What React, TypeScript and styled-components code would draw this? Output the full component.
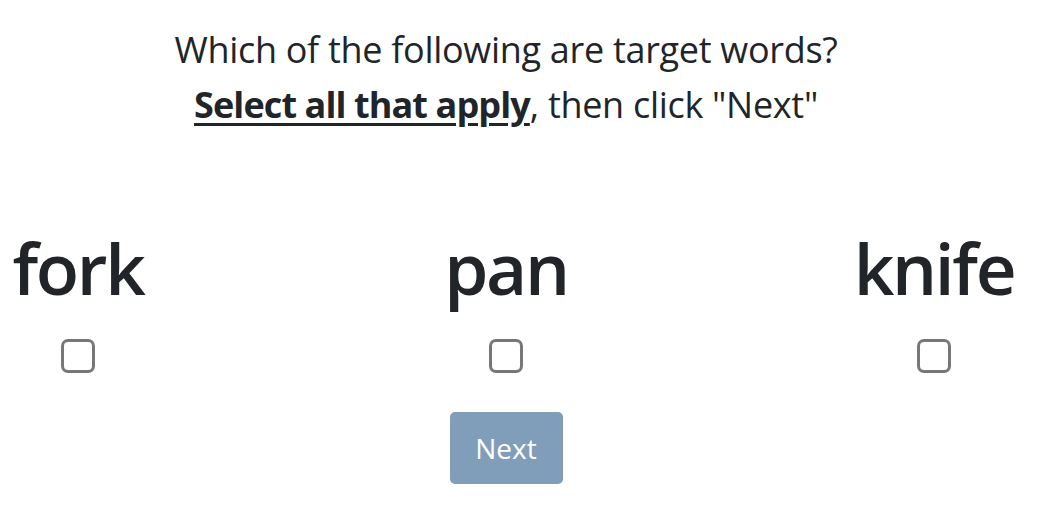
import React from "react";
import styled, { createGlobalStyle } from "styled-components";

const Global = createGlobalStyle`
  html, body { margin: 0; padding: 0; background: #ffffff; }
  body { font-family: "Open Sans", "Noto Sans", sans-serif; color: #212529; }
`;

const Page = styled.div`
  display: flex;
  flex-direction: column;
  align-items: center;
  width: 1012px;
  padding-top: 22px;
`;

const Prompt = styled.div`
  font-size: 36px;
  line-height: 55px;
  letter-spacing: -0.3px;
  text-align: center;
`;

const Strong = styled.span`
  font-weight: 700;
  letter-spacing: -0.9px;
  text-decoration: underline;
  text-decoration-thickness: 3px;
  text-underline-offset: 5px;
`;

const Words = styled.div`
  display: grid;
  grid-template-columns: repeat(3, 156px);
  justify-content: space-between;
  width: 100%;
  margin-top: 96px;
`;

const Option = styled.label`
  display: flex;
  flex-direction: column;
  align-items: center;
`;

const Word = styled.span`
  font-size: 71px;
  font-weight: 600;
  letter-spacing: -2.3px;
  line-height: 80px;
  white-space: nowrap;
`;

const Box = styled.input.attrs({ type: "checkbox" })`
  appearance: none;
  width: 34px;
  height: 34px;
  margin: 31px 0 0 0;
  border: 3px solid #777777;
  border-radius: 7px;
  background: #fff;
  box-sizing: border-box;
`;

const NextButton = styled.button`
  margin-top: 39px;
  width: 113px;
  height: 72px;
  background: #809eb9;
  border: none;
  border-radius: 5px;
  color: #ffffff;
  font-family: "Open Sans", "Noto Sans", sans-serif;
  font-size: 28px;
`;

export default function App() {
  return (
    <>
      <Global />
      <Page>
        <Prompt>
          Which of the following are target words?
          <br />
          <Strong>Select all that apply</Strong>, then click "Next"
        </Prompt>
        <Words>
          {["fork", "pan", "knife"].map((w) => (
            <Option key={w}>
              <Word>{w}</Word>
              <Box />
            </Option>
          ))}
        </Words>
        <NextButton>Next</NextButton>
      </Page>
    </>
  );
}
